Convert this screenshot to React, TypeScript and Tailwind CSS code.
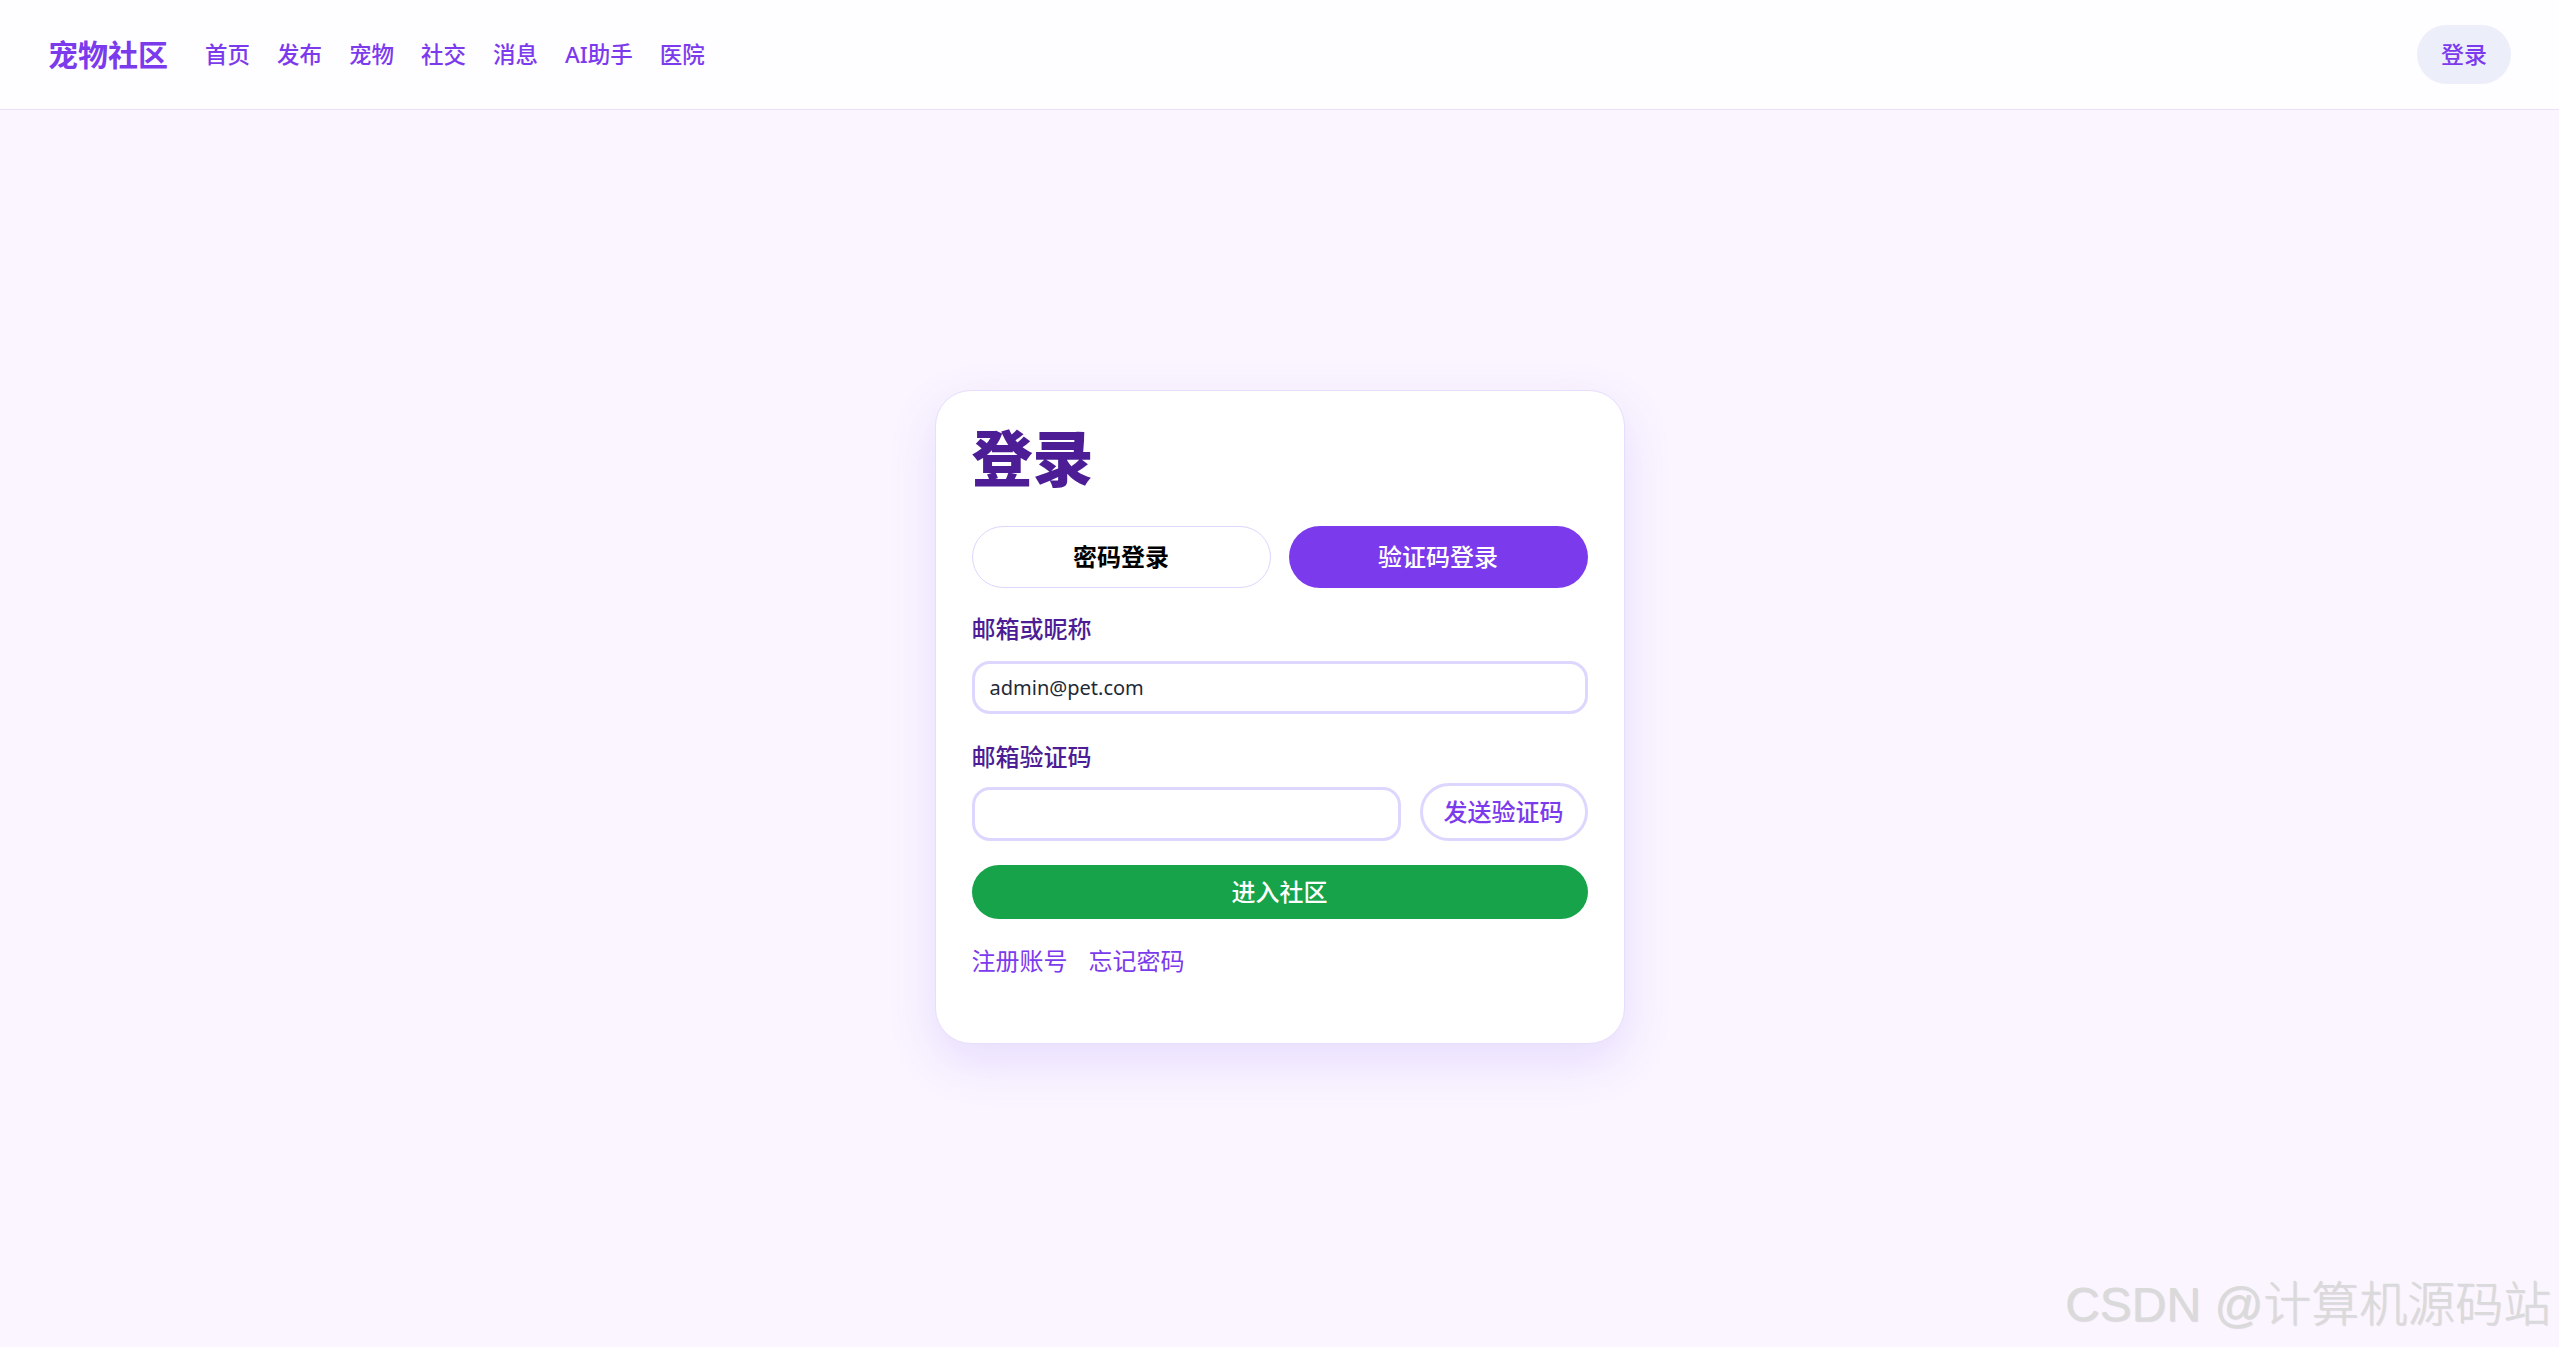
import { useState } from "react";

const navLinks = ["首页", "发布", "宠物", "社交", "消息", "AI助手", "医院"];

const Header = () => {
  return (
    <header className="flex h-[110px] items-center justify-between border-b-[1.5px] border-[#e8e0fb] bg-[#fefdff] px-[48px]">
      <div className="flex items-center">
        <span className="text-[30px] font-bold text-[#7c3aed]">宠物社区</span>
        <nav className="ml-[37px] flex items-center gap-[27px]">
          {navLinks.map((link) => (
            <a key={link} href="#" className="text-[22.5px] font-medium text-[#7c3aed]">
              {link}
            </a>
          ))}
        </nav>
      </div>
      <button className="h-[59px] rounded-full bg-[#eceefa] px-[24px] text-[23px] font-medium text-[#7c3aed]">
        登录
      </button>
    </header>
  );
};

const LoginCard = () => {
  const [mode, setMode] = useState<"password" | "code">("code");

  const tabClass = (active: boolean) =>
    active
      ? "h-[62px] rounded-full bg-[#7c3aed] text-[24px] font-medium text-white"
      : "h-[62px] rounded-full border-[1.5px] border-[#ddd6fe] bg-white text-[24px] font-semibold text-black";

  return (
    <div className="w-[690px] rounded-[36px] border-[1.5px] border-[#e6defc] bg-white px-[36px] pb-[65px] pt-[37px] shadow-[0_18px_48px_rgba(139,92,246,0.16)]">
      <h1 className="text-[61px] font-extrabold leading-none text-[#4c1d95]">登录</h1>

      <div className="mt-[37px] grid grid-cols-2 gap-[18px]">
        <button className={tabClass(mode === "password")} onClick={() => setMode("password")}>
          密码登录
        </button>
        <button className={tabClass(mode === "code")} onClick={() => setMode("code")}>
          验证码登录
        </button>
      </div>

      <label className="mt-[24px] block text-[24px] font-medium leading-[34px] text-[#4c1d95]">
        邮箱或昵称
      </label>
      <input
        defaultValue="admin@pet.com"
        className="mt-[15px] h-[53px] w-full rounded-[18px] border-[3px] border-[#ddd6fe] bg-white px-[15px] text-[20px] text-[#1f2937] outline-none"
      />

      <label className="mt-[26px] block text-[24px] font-medium leading-[34px] text-[#4c1d95]">
        邮箱验证码
      </label>
      <div className="mt-[9px] flex items-end gap-[19px]">
        <input className="h-[54px] min-w-0 flex-1 rounded-[18px] border-[3px] border-[#ddd6fe] bg-white px-[15px] text-[20px] outline-none" />
        <button className="h-[58px] w-[168px] rounded-full border-[3px] border-[#ddd6fe] bg-white text-[24px] font-medium text-[#7c3aed]">
          发送验证码
        </button>
      </div>

      <button className="mt-[24px] h-[54px] w-full rounded-full bg-[#16a34a] text-[24px] font-medium text-white">
        进入社区
      </button>

      <div className="mt-[24px] flex gap-[21px] text-[24px] leading-[35px] text-[#7c3aed]">
        <a href="#">注册账号</a>
        <a href="#">忘记密码</a>
      </div>
    </div>
  );
};

export default function App() {
  return (
    <div
      className="relative min-h-screen bg-[#faf5ff]"
      style={{ fontFamily: '"Noto Sans", "Noto Sans CJK SC", sans-serif' }}
    >
      <Header />
      <main className="flex justify-center pt-[280px]">
        <LoginCard />
      </main>
      <span className="absolute bottom-[18px] right-[8px] text-[48px] font-light leading-none text-[#dadada] [text-shadow:1px_1px_1px_rgba(0,0,0,0.12)] [font-family:'Liberation_Sans','Noto_Sans_CJK_SC',sans-serif]">
        CSDN @计算机源码站
      </span>
    </div>
  );
}
